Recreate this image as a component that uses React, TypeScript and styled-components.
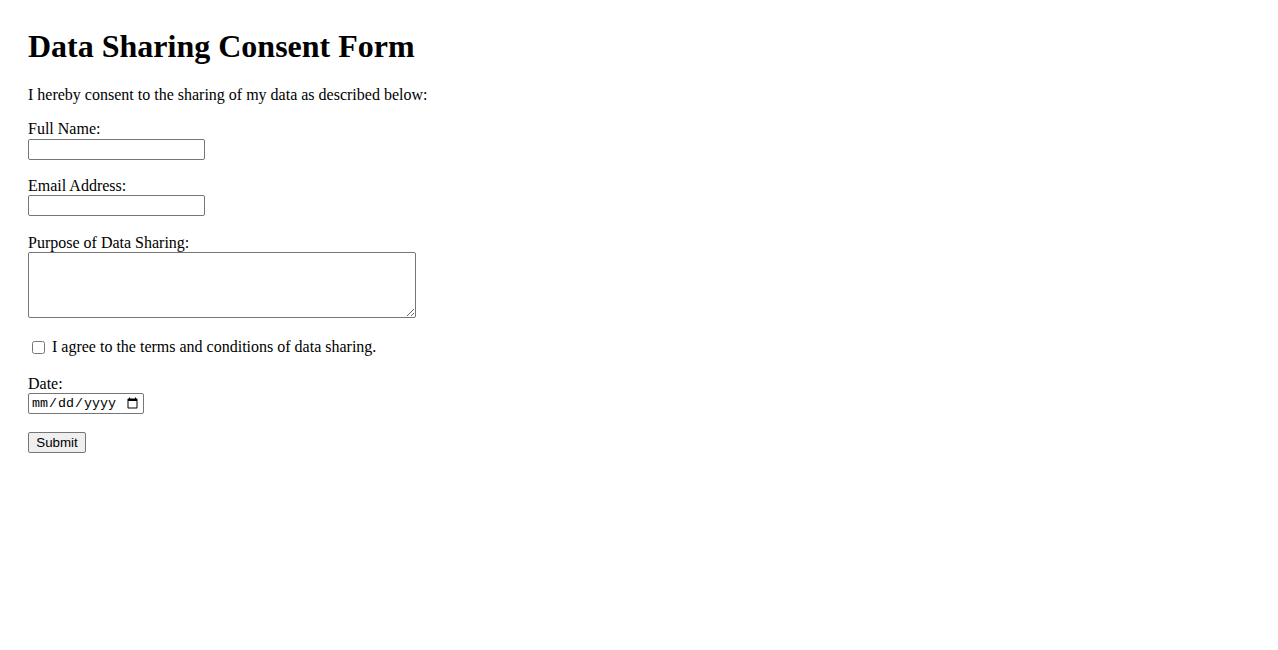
import { createGlobalStyle, styled } from "styled-components";

const GlobalStyle = createGlobalStyle`
    body {
        margin: 8px;
        font-family: "Liberation Serif", "Times New Roman", serif;
        font-size: 16px;
        color: #000;
        background: #fff;
    }
`;

function App() {
    return (
        <>
            <GlobalStyle />
            <Page>
                <Title>Data Sharing Consent Form</Title>
                <Intro>I hereby consent to the sharing of my data as described below:</Intro>
                <form onSubmit={(e) => e.preventDefault()}>
                    <Field $space={17}>
                        <label htmlFor="fullName">Full Name:</label>
                        <TextInput id="fullName" type="text" />
                    </Field>
                    <Field $space={18}>
                        <label htmlFor="email">Email Address:</label>
                        <TextInput id="email" type="email" />
                    </Field>
                    <Field $space={20}>
                        <label htmlFor="purpose">Purpose of Data Sharing:</label>
                        <TextArea id="purpose" rows={4} />
                    </Field>
                    <CheckRow>
                        <input type="checkbox" id="agree" />
                        <label htmlFor="agree">I agree to the terms and conditions of data sharing.</label>
                    </CheckRow>
                    <Field $space={18}>
                        <label htmlFor="date">Date:</label>
                        <DateInput id="date" type="date" />
                    </Field>
                    <SubmitButton type="submit">Submit</SubmitButton>
                </form>
            </Page>
        </>
    );
}

const Page = styled.div`
    padding: 20px;
`;

const Title = styled.h1`
    margin: 0 0 21.44px 0;
    font-size: 32px;
    font-weight: bold;
`;

const Intro = styled.p`
    margin: 0 0 16px 0;
`;

const Field = styled.div<{ $space: number }>`
    display: flex;
    flex-direction: column;
    align-items: flex-start;
    margin-bottom: ${(props) => props.$space}px;

    label {
        line-height: 18.4px;
    }
`;

const controlBase = `
    box-sizing: border-box;
    border: 1px solid #767676;
    border-radius: 2px;
    background: #fff;
    margin: 0;
`;

const TextInput = styled.input`
    ${controlBase}
    width: 177px;
    height: 21px;
    padding: 1px 2px;
    font-family: "Liberation Sans", Arial, sans-serif;
    font-size: 13.33px;
`;

const TextArea = styled.textarea`
    ${controlBase}
    margin-top: -1px;
    width: 388px;
    height: 66px;
    padding: 2px;
    font-family: "Liberation Mono", monospace;
    font-size: 13.33px;
`;

const CheckRow = styled.div`
    display: flex;
    align-items: center;
    height: 20px;
    margin-bottom: 17px;

    input {
        width: 13px;
        height: 13px;
        margin: 0 7px 0 4px;
    }

    label {
        line-height: 18.4px;
    }
`;

const DateInput = styled.input`
    ${controlBase}
    width: 116px;
    height: 21px;
    padding: 1px 2px;
    font-family: "Liberation Mono", monospace;
    font-size: 13.33px;
`;

const SubmitButton = styled.button`
    box-sizing: border-box;
    width: 58px;
    height: 21px;
    padding: 1px 6px;
    border: 1px solid #767676;
    border-radius: 2px;
    background: #efefef;
    font-family: "Liberation Sans", Arial, sans-serif;
    font-size: 13.33px;
    color: #000;
`;

export default App;
